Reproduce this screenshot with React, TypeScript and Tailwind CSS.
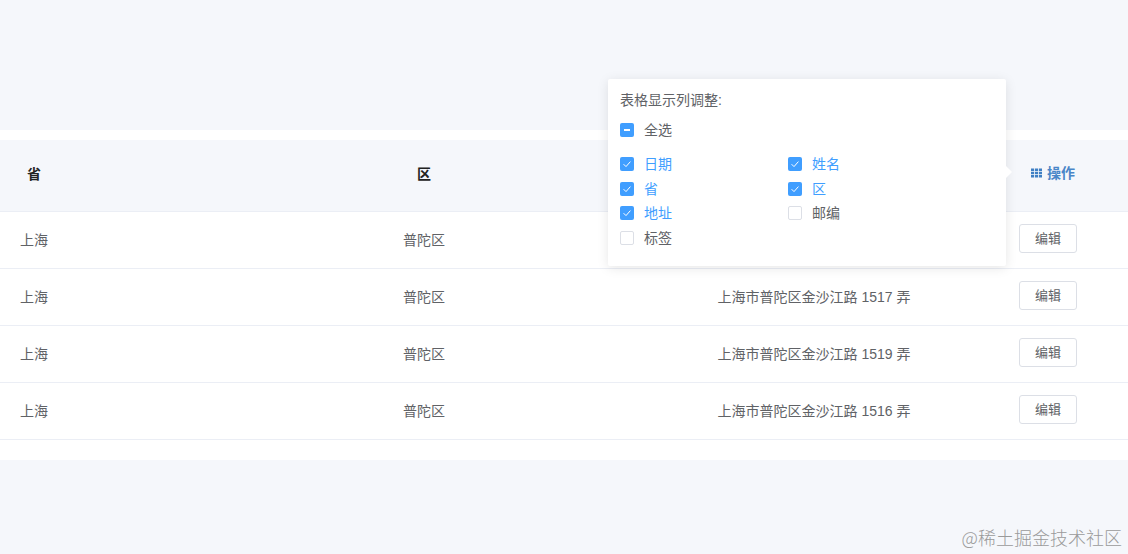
const rows = [
  null,
  "上海市普陀区金沙江路 1517 弄",
  "上海市普陀区金沙江路 1519 弄",
  "上海市普陀区金沙江路 1516 弄",
];

const options = [
  { label: "日期", on: true },
  { label: "姓名", on: true },
  { label: "省", on: true },
  { label: "区", on: true },
  { label: "地址", on: true },
  { label: "邮编", on: false },
  { label: "标签", on: false },
];

const grid = "grid grid-cols-[188px_472px_308px_160px] items-center";

function Box({ state }: { state: "on" | "off" | "mixed" }) {
  if (state === "off") {
    return <span className="box-border w-[14px] h-[14px] rounded-[2px] border border-[#dcdfe6] bg-white shrink-0" />;
  }
  return (
    <span className="flex items-center justify-center w-[14px] h-[14px] rounded-[2px] bg-[#409eff] shrink-0">
      {state === "on" ? (
        <svg width="10" height="10" viewBox="0 0 10 10" fill="none">
          <path d="M1.6 5.2 L4 7.6 L8.4 2.6" stroke="#fff" strokeWidth="1" />
        </svg>
      ) : (
        <span className="w-[6px] h-[1.5px] bg-white" />
      )}
    </span>
  );
}

export default function App() {
  return (
    <div className="relative w-[1128px] h-[554px] overflow-hidden bg-[#f5f7fb] pt-[130px] text-[14px] leading-none text-[#606266] font-['Liberation_Sans','Noto_Sans_CJK_SC',sans-serif]">
      <div className="bg-white h-[330px] pt-[10px]">
        <div className={`${grid} h-[72px] bg-[#f5f7fb] border-b border-[#ebeef5] font-bold text-[#222]`}>
          <div className="w-[68px] text-center pb-[3px]">省</div>
          <div className="text-center pb-[3px]">区</div>
          <div />
          <div className="relative self-stretch flex items-center justify-center gap-[5px] pl-[10px] pb-[6px] text-[#4a86c8]">
            <svg width="11" height="10" viewBox="0 0 12 10" fill="#3f7fc4">
              <path d="M0 0h3.4v2.8H0zM4.3 0h3.4v2.8H4.3zM8.6 0H12v2.8H8.6zM0 3.6h3.4v2.8H0zM4.3 3.6h3.4v2.8H4.3zM8.6 3.6H12v2.8H8.6zM0 7.2h3.4V10H0zM4.3 7.2h3.4V10H4.3zM8.6 7.2H12V10H8.6z" />
            </svg>
            操作
            <div className="absolute right-[122px] top-[-61px] z-10 w-[398px] h-[187px] bg-white rounded-[2px] shadow-[0_2px_12px_rgba(0,0,0,0.1)] px-[12px] pt-[14px] font-normal text-[#606266]">
              <span className="absolute right-[-6px] top-[87px] w-0 h-0 border-y-[6px] border-l-[6px] border-y-transparent border-l-white" />
              <div className="h-[14px] leading-[14px]">表格显示列调整:</div>
              <div className="flex items-center gap-[10px] mt-[16px] h-[14px]">
                <Box state="mixed" />
                <span>全选</span>
              </div>
              <div className="grid grid-cols-[168px_168px] gap-y-[10.7px] mt-[20px]">
                {options.map((o) => (
                  <div key={o.label} className="flex items-center gap-[10px] h-[14px]">
                    <Box state={o.on ? "on" : "off"} />
                    <span className={o.on ? "text-[#409eff]" : ""}>{o.label}</span>
                  </div>
                ))}
              </div>
            </div>
          </div>
        </div>
        {rows.map((addr, i) => (
          <div key={i} className={`${grid} h-[57px] border-b border-[#ebeef5]`}>
            <div className="w-[68px] text-center">上海</div>
            <div className="text-center">普陀区</div>
            <div className="text-center">{addr}</div>
            <div className="flex justify-center mb-[3px]">
              <button className="w-[58px] h-[29px] bg-white border border-[#dcdfe6] rounded-[3px] text-[13px] text-[#606266]">编辑</button>
            </div>
          </div>
        ))}
      </div>
      <div className="absolute right-[6px] bottom-[7px] text-[18px] leading-[20px] text-[#9a9a9a] font-['Noto_Sans_CJK_SC',sans-serif] font-light">@稀土掘金技术社区</div>
    </div>
  );
}
